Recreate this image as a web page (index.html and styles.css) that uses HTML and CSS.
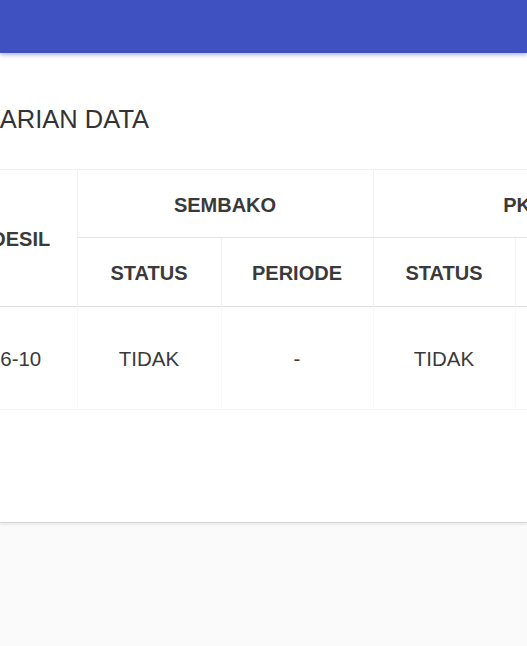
FILE: index.html
```html
<!DOCTYPE html>
<html>
<head>
<meta charset="utf-8">
<link rel="stylesheet" href="styles.css">
</head>
<body>
<header class="appbar"></header>
<main class="card">
  <div class="card-inner">
    <h1 class="title">PENCARIAN DATA</h1>
    <table class="result">
      <colgroup>
        <col class="c-desil">
        <col class="c-status">
        <col class="c-periode">
        <col class="c-status2">
        <col class="c-periode2">
      </colgroup>
      <thead>
        <tr class="r1">
          <th rowspan="2">DESIL</th>
          <th colspan="2">SEMBAKO</th>
          <th colspan="2">PKH</th>
        </tr>
        <tr class="r2">
          <th>STATUS</th>
          <th>PERIODE</th>
          <th>STATUS</th>
          <th>PERIODE</th>
        </tr>
      </thead>
      <tbody>
        <tr class="r3">
          <td>6-10</td>
          <td>TIDAK</td>
          <td>-</td>
          <td>TIDAK</td>
          <td>-</td>
        </tr>
      </tbody>
    </table>
  </div>
</main>
</body>
</html>
```

FILE: styles.css
```css
html, body {
  margin: 0;
  padding: 0;
}
body {
  background: #fafafa;
  font-family: "Liberation Sans", Arial, Helvetica, sans-serif;
  color: #333;
  width: 527px;
  height: 646px;
  overflow: hidden;
}
.appbar {
  height: 53px;
  background: #3f50c0;
  box-shadow: 0 2px 4px rgba(40, 50, 140, 0.35);
  position: relative;
  z-index: 2;
}
.card {
  background: #fff;
  height: 469px;
  overflow: hidden;
  border-bottom: 1px solid #d6d6d6;
  box-shadow: 0 2px 2px rgba(0, 0, 0, 0.06);
}
.card-inner {
  padding-top: 51px;
  width: 800px;
}
.title {
  margin: 0 0 0 -71px;
  font-size: 25.5px;
  font-weight: 400;
  line-height: 30px;
  color: #333;
  height: 65px;
}
.result {
  margin-left: -35px;
  border-collapse: collapse;
  table-layout: fixed;
  width: 710px;
  border-top: 1px solid #f0f0f0;
}
.c-desil { width: 112px; }
.c-status { width: 144px; }
.c-periode { width: 152px; }
.c-status2 { width: 142px; }
.c-periode2 { width: 160px; }
.result th {
  font-size: 20px;
  font-weight: 700;
  color: #3a3a3a;
  text-align: center;
  padding: 3px 0 0;
  border-left: 1px solid #f2f2f2;
}
.result th:first-child {
  border-left: none;
}
.r2 th:first-child {
  border-left: 1px solid #f2f2f2;
}
.r1 { height: 68px; }
.r1 th[colspan] {
  border-bottom: 1px solid #e4e4e4;
}
.r2 { height: 69px; }
.result thead {
  border-bottom: 1px solid #dedede;
}
.r3 { height: 103px; }
.result td {
  font-size: 20.5px;
  text-align: center;
  color: #3a3a3a;
  padding: 2px 0 0;
  border-left: 1px solid #f8f8f8;
  border-bottom: 1px solid #f3f3f3;
}
.result td:first-child {
  border-left: none;
}
```
